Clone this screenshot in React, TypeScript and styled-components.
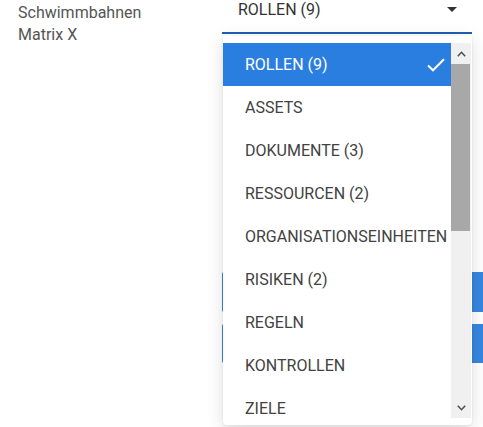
import React from "react";
import styled, { createGlobalStyle } from "styled-components";

const Global = createGlobalStyle`
  html, body { margin: 0; padding: 0; background: #fff; }
  body { font-family: Roboto, "Noto Sans", Arial, sans-serif; overflow: hidden; }
`;

const Page = styled.div`
  display: flex;
  width: 483px;
  height: 427px;
  overflow: hidden;
  background: #fff;
`;

const LabelCol = styled.div`
  width: 204px;
  flex: none;
  padding: 2px 0 0 18px;
  font-size: 16px;
  line-height: 22px;
  color: #555;
`;

const FieldCol = styled.div`
  position: relative;
  width: 250px;
  flex: none;
  display: flex;
  flex-direction: column;
`;

const Select = styled.div`
  height: 32px;
  border-bottom: 2px solid #1f5fb1;
  display: flex;
  align-items: flex-start;
  justify-content: space-between;
  padding: 0 15px 0 16px;
  font-size: 16px;
  line-height: 19px;
  color: #333;
`;

const Caret = styled.span`
  width: 0;
  height: 0;
  margin-top: 7px;
  border-left: 5px solid transparent;
  border-right: 5px solid transparent;
  border-top: 5px solid #333;
`;

const ButtonStack = styled.div`
  margin-top: 238px;
  display: flex;
  flex-direction: column;
  gap: 12px;
`;

const BlueButton = styled.div<{ $h: number }>`
  width: 280px;
  height: ${(p) => p.$h}px;
  background: #3686e0;
  border-radius: 2px;
`;

const Panel = styled.div`
  position: absolute;
  top: 36px;
  left: 1px;
  width: 249px;
  height: 389px;
  box-sizing: border-box;
  padding: 7px 1px 7px 0;
  background: #fff;
  border-radius: 0 0 4px 4px;
  box-shadow: 0 4px 18px rgba(0, 0, 0, 0.13), 0 1px 3px rgba(0, 0, 0, 0.08);
  display: flex;
  z-index: 5;
`;

const List = styled.div`
  width: 228px;
  height: 375px;
  overflow: hidden;
  flex: none;
`;

const Item = styled.div<{ $selected?: boolean }>`
  height: 43px;
  display: flex;
  align-items: center;
  justify-content: space-between;
  padding: 0 6px 0 22px;
  font-size: 16px;
  white-space: nowrap;
  color: ${(p) => (p.$selected ? "#fff" : "#424242")};
  background: ${(p) => (p.$selected ? "#2a7ee0" : "transparent")};
`;

const ScrollTrack = styled.div`
  width: 20px;
  height: 375px;
  flex: none;
  background: #f0f0f0;
  display: flex;
  flex-direction: column;
`;

const ScrollBtn = styled.div`
  height: 21px;
  display: flex;
  align-items: center;
  justify-content: center;
  flex: none;
`;

const Thumb = styled.div`
  height: 167px;
  width: 19px;
  background: #a8a8a8;
  flex: none;
`;

const Spacer = styled.div`
  flex: 1;
`;

const items = [
  "ROLLEN (9)",
  "ASSETS",
  "DOKUMENTE (3)",
  "RESSOURCEN (2)",
  "ORGANISATIONSEINHEITEN",
  "RISIKEN (2)",
  "REGELN",
  "KONTROLLEN",
  "ZIELE",
];

const Check = () => (
  <svg width="18" height="14" viewBox="0 0 18 14" fill="none">
    <path d="M1 7.5 L6 12.3 L17 1.2" stroke="#fff" strokeWidth="2" />
  </svg>
);

const Chevron = ({ up }: { up?: boolean }) => (
  <svg width="9" height="6" viewBox="0 0 9 6" fill="none">
    <path
      d={up ? "M0.8 5.2 L4.5 1.3 L8.2 5.2" : "M0.8 0.8 L4.5 4.7 L8.2 0.8"}
      stroke="#505050"
      strokeWidth="1.6"
    />
  </svg>
);

export default function App() {
  return (
    <Page>
      <Global />
      <LabelCol>
        Schwimmbahnen
        <br />
        Matrix X
      </LabelCol>
      <FieldCol>
        <Select>
          <span>ROLLEN (9)</span>
          <Caret />
        </Select>
        <ButtonStack>
          <BlueButton $h={40} />
          <BlueButton $h={39} />
        </ButtonStack>
        <Panel>
          <List>
            {items.map((t, i) => (
              <Item key={t} $selected={i === 0}>
                <span>{t}</span>
                {i === 0 && <Check />}
              </Item>
            ))}
          </List>
          <ScrollTrack>
            <ScrollBtn>
              <Chevron up />
            </ScrollBtn>
            <Thumb />
            <Spacer />
            <ScrollBtn>
              <Chevron />
            </ScrollBtn>
          </ScrollTrack>
        </Panel>
      </FieldCol>
    </Page>
  );
}
